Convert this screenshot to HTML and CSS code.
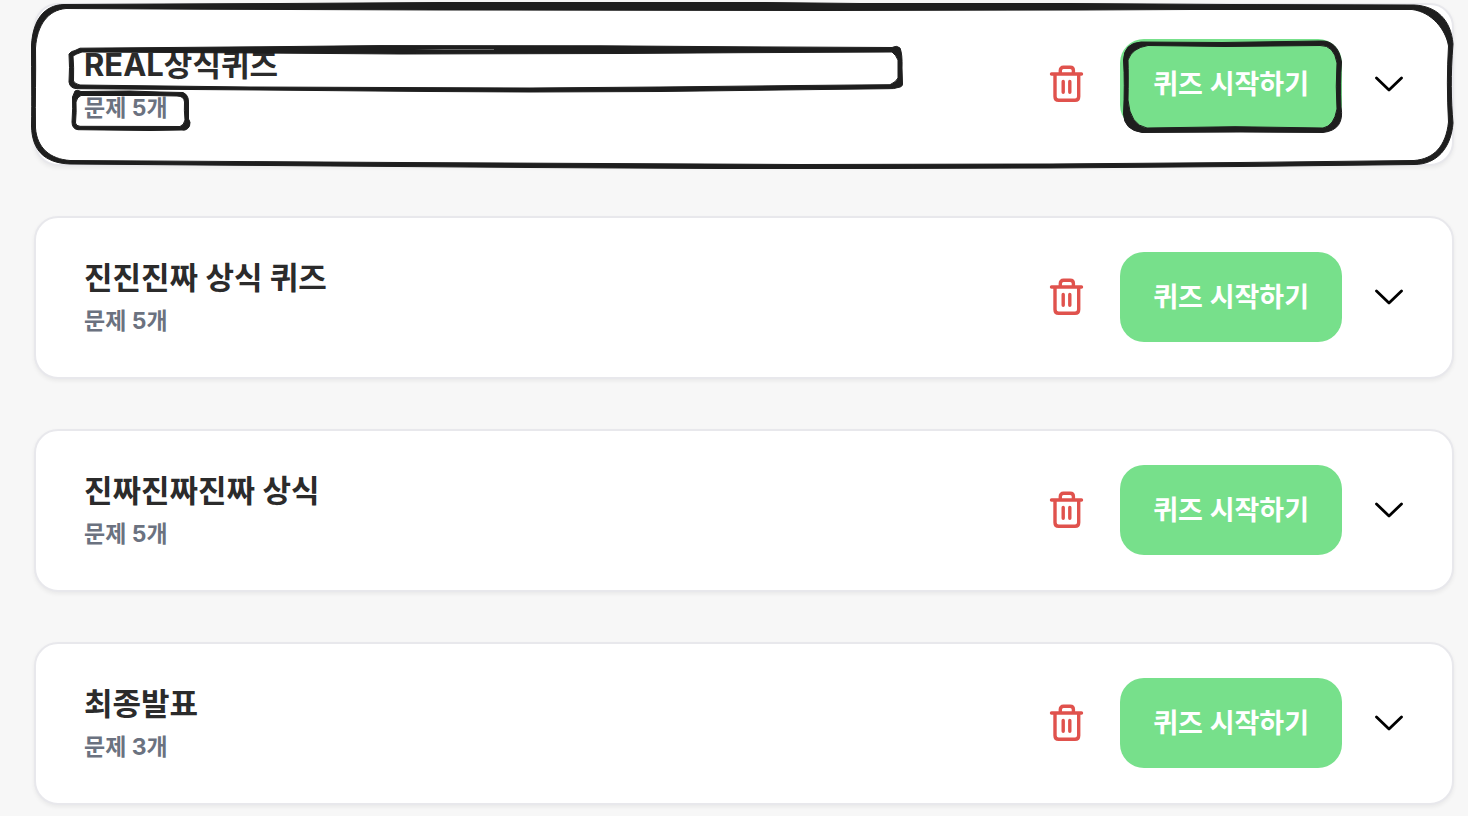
FILE: index.html
```html
<!DOCTYPE html>
<html lang="ko">
<head>
  <meta charset="UTF-8">
  <meta name="viewport" content="width=device-width, initial-scale=1.0">
  <title>퀴즈 목록</title>
  <link rel="stylesheet" href="styles.css">
</head>
<body>

<!-- Shared icons -->
<svg class="icon-defs" aria-hidden="true">
  <symbol id="icon-trash" viewBox="-1 0 42 42">
    <path d="M5.500 11H35.500M14.300 10V7.500Q14.300 4.300 17.500 4.300H24.200Q27.400 4.300 27.400 7.500V10M9 11V33.500Q9 37.300 12.700 37.300H29Q32.700 37.300 32.700 33.500V11M17.200 18.500V29.200M23.800 18.500V29.200" fill="none" stroke="currentColor" stroke-width="3.400" stroke-linecap="round" stroke-linejoin="round"/>
  </symbol>
  <symbol id="icon-chevron" viewBox="0 0 28 18">
    <path d="M1.500 3L14 15L26.500 3" fill="none" stroke="currentColor" stroke-width="2.800" stroke-linecap="round" stroke-linejoin="round"/>
  </symbol>
</svg>

<main class="page">
  <ul class="quiz-list">
    <li class="quiz-card">
      <div class="quiz-info">
        <h2>REAL상식퀴즈</h2>
        <p>문제 5개</p>
      </div>
      <button class="icon-button delete" aria-label="삭제"><svg><use href="#icon-trash"/></svg></button>
      <button class="start-button">퀴즈 시작하기</button>
      <button class="icon-button toggle" aria-label="펼치기"><svg><use href="#icon-chevron"/></svg></button>
    </li>
    <li class="quiz-card">
      <div class="quiz-info">
        <h2>진진진짜 상식 퀴즈</h2>
        <p>문제 5개</p>
      </div>
      <button class="icon-button delete" aria-label="삭제"><svg><use href="#icon-trash"/></svg></button>
      <button class="start-button">퀴즈 시작하기</button>
      <button class="icon-button toggle" aria-label="펼치기"><svg><use href="#icon-chevron"/></svg></button>
    </li>
    <li class="quiz-card">
      <div class="quiz-info">
        <h2>진짜진짜진짜 상식</h2>
        <p>문제 5개</p>
      </div>
      <button class="icon-button delete" aria-label="삭제"><svg><use href="#icon-trash"/></svg></button>
      <button class="start-button">퀴즈 시작하기</button>
      <button class="icon-button toggle" aria-label="펼치기"><svg><use href="#icon-chevron"/></svg></button>
    </li>
    <li class="quiz-card">
      <div class="quiz-info">
        <h2>최종발표</h2>
        <p>문제 3개</p>
      </div>
      <button class="icon-button delete" aria-label="삭제"><svg><use href="#icon-trash"/></svg></button>
      <button class="start-button">퀴즈 시작하기</button>
      <button class="icon-button toggle" aria-label="펼치기"><svg><use href="#icon-chevron"/></svg></button>
    </li>
  </ul>

  <!-- Hand drawn outlines over the first card -->
  <svg class="sketch" viewBox="0 0 1468 180" aria-hidden="true">
    <!-- card -->
    <path d="M64 4.500L280 3.500L440 2.500L765 2.500L860 3.500L1070 3.500L1230 4.500L1414 5C1437 6 1451 20 1453 44C1450.500 75 1451 100 1453 123C1451 148 1437 164.500 1414 164.500L1240 166.500L1050 168L880 168.500L720 168.500L530 167.500L400 166.500L70 164C44 163 32 150 31.500 126C32 100 31.500 75 31.500 45C33 20 44 5 64 4.500ZM66 8.500C48 10 37 25 35.500 48C36 75 35 100 35.500 128C37 148 50 159 70 160.500L400 162.500L600 163.500L800 164.500L1050 164L1240 162.500L1414 160.500C1434 159 1446 146 1448.500 122C1447 95 1447 70 1448.500 46C1446 30 1432 12 1412 9.500L1190 9.500L1080 10L820 10.500L440 10L200 9.200Z"/>
    <!-- title -->
    <path d="M80 48.200L260 46.800L380 45.600L600 45.800L740 46.800L892 47.500Q897 45 900 48Q902.500 54 902 68L902.500 84Q902.500 87 898 87.500Q894 89 888 88.700L780 90L660 91.500L530 92L430 91.500L260 90L78 88.700Q70 89 69 82Q70 67 69 54Q71 51 75 50.500ZM82 52L260 53L400 54L620 53.500L740 52.700L892 52Q896 55 898 60L898 78Q896 82 890 84.700L800 85.500L660 87L530 88L390 87.500L250 87L80 85Q75 84 73.500 81Q74 67 73 56Q76 54 82 52Z"/>
    <path class="sketch-gap" d="M414 49H494V50H444Z"/>
    <!-- question count -->
    <path d="M75 91Q77 89.500 81 91.500L130 91L160 92L183 92.500Q189 95 188.500 103L188.500 119Q191 122 189.500 126Q187 131 182 130L150 130.500L78 129.700Q72 129 72 122Q73 108 72.500 97ZM81 95.500Q77 97 76 102Q76.500 112 75.500 123Q76 126 80 126.300L180 126.500Q184 125 185 120Q184 110 184.500 102Q184 96 177 96L150 95.500Z"/>
    <!-- start button -->
    <path d="M1141 42L1222 42.500L1320 41Q1338 40 1341.500 62Q1340 82 1341 107Q1345 130 1323 132.500L1240 132L1142 132.500Q1124 130 1123.500 114Q1125 84 1123.500 60Q1124 43 1141 42ZM1148 45.500Q1132 48 1128 60Q1128.500 76 1128 100Q1130 125 1147 128L1235 126.700L1323 128Q1334 126 1337 109Q1335.500 87 1337 63Q1334 45 1320 45.500L1225 46.500Z"/>
  </svg>
</main>

</body>
</html>
```

FILE: styles.css
```css
* {
  box-sizing: border-box;
}
body {
  margin: 0;
  background-color: #f7f7f7;
  color: #2b2b2b;
  font-family: Inter, "Noto Sans CJK KR", sans-serif;
}
.icon-defs {
  position: absolute;
  width: 0;
  height: 0;
}
.page {
  position: relative;
  padding: 3px 14px 12px 34px;
}

/* Quiz list */
.quiz-list {
  display: flex;
  flex-direction: column;
  gap: 50px;
  margin: 0;
  padding: 0;
  list-style: none;
}
.quiz-card {
  display: flex;
  align-items: center;
  gap: 33px;
  padding: 34px 49px 35px 48px;
  background-color: #fff;
  border: 2px solid #e8e8ec;
  border-radius: 24px;
  box-shadow: 0 2px 4px rgba(0, 0, 0, 0.06);
}
.quiz-info {
  flex: 1;
  padding-top: 2px;
}
.quiz-info h2 {
  margin: 0;
  font-size: 31px;
  font-weight: 700;
  line-height: 46px;
}
.quiz-info p {
  margin: 0;
  color: #6b7280;
  font-size: 23px;
  font-weight: 700;
  line-height: 40px;
}

/* Buttons */
.start-button {
  padding: 26px 33px 24px;
  background-color: #77e08b;
  border: none;
  border-radius: 24px;
  color: #fff;
  font-family: inherit;
  font-size: 27px;
  font-weight: 600;
  line-height: 40px;
  white-space: nowrap;
  cursor: pointer;
}
.icon-button {
  padding: 0;
  background: none;
  border: none;
  cursor: pointer;
}
.icon-button svg {
  display: block;
}
.delete {
  color: #e0524d;
}
.delete svg {
  width: 42px;
  height: 42px;
}
.toggle {
  color: #000;
}
.toggle svg {
  width: 28px;
  height: 18px;
}

/* Sketch overlay */
.sketch {
  position: absolute;
  top: 0;
  left: 0;
  width: 100%;
  fill: #1e1e1e;
  fill-rule: evenodd;
  stroke: #1e1e1e;
  stroke-width: 1;
  stroke-linejoin: round;
  pointer-events: none;
}
.sketch .sketch-gap {
  fill: #666;
  stroke: none;
}
```
